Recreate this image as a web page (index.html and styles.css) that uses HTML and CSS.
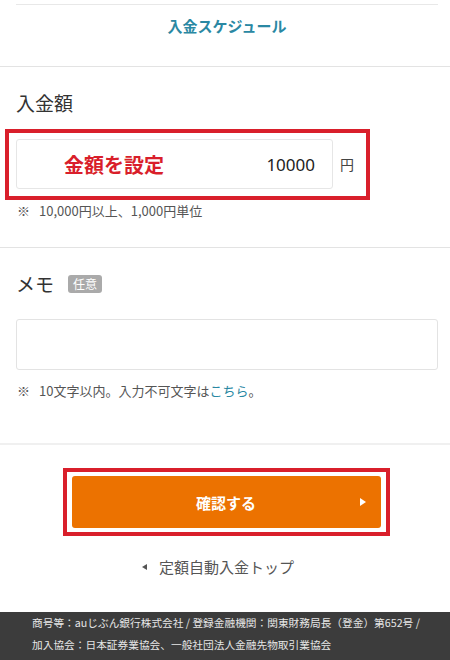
FILE: index.html
```html
<!DOCTYPE html>
<html lang="ja">

<head>
    <meta charset="UTF-8">
    <meta name="viewport" content="width=device-width, initial-scale=1.0">
    <title>定額自動入金</title>
    <link rel="stylesheet" href="styles.css">
</head>

<body>

    <!-- 入金スケジュール -->
    <div class="schedule">
        <div class="schedule-inner">
            <a class="schedule-link" href="#">入金スケジュール</a>
        </div>
    </div>

    <!-- 入金額 -->
    <section class="section amount">
        <h2 class="section-title">入金額</h2>
        <div class="mark-frame amount-frame">
            <div class="amount-input">
                <span class="amount-hint">金額を設定</span>
                <span class="amount-value">10000</span>
            </div>
            <span class="unit">円</span>
        </div>
        <p class="note">※<span class="note-text">10,000円以上、1,000円単位</span></p>
    </section>

    <!-- メモ -->
    <section class="section memo">
        <h2 class="section-title">メモ<span class="badge">任意</span></h2>
        <div class="memo-input"></div>
        <p class="note">※<span class="note-text">10文字以内。入力不可文字は<a href="#">こちら</a>。</span></p>
    </section>

    <!-- 確認ボタン -->
    <div class="actions">
        <div class="mark-frame button-frame">
            <button class="confirm-btn">確認する<span class="btn-arrow"></span></button>
        </div>
        <a class="back-link" href="#"><span class="back-arrow"></span>定額自動入金トップ</a>
    </div>

    <footer class="footer">
        <p>商号等：auじぶん銀行株式会社 / 登録金融機関：関東財務局長（登金）第652号 /</p>
        <p>加入協会：日本証券業協会、一般社団法人金融先物取引業協会</p>
    </footer>

</body>

</html>
```

FILE: styles.css
```css
body {
    margin: 0;
    padding: 0;
    background-color: #fff;
    color: #333;
    font-family: "Noto Sans CJK JP", "Noto Sans", sans-serif;
}

a {
    text-decoration: none;
}

/* 入金スケジュール */
.schedule {
    padding-top: 4px;
    border-bottom: 1px solid #e3e3e3;
}

.schedule-inner {
    margin: 0 12px 0 16px;
    height: 62px;
    border-top: 1px solid #e8e8e8;
    display: flex;
    align-items: center;
    justify-content: center;
    box-sizing: border-box;
    padding-bottom: 21px;
}

.schedule-link {
    color: #2a88a3;
    font-size: 15px;
    font-weight: bold;
}

/* セクション共通 */
.section {
    padding: 23px 12px 28px 16px;
    border-bottom: 1px solid #e3e3e3;
}

.section-title {
    margin: 0;
    font-size: 19px;
    font-weight: normal;
    line-height: 26px;
    color: #333;
    display: flex;
    align-items: center;
}

.note {
    margin: 3px 0 0;
    font-size: 13px;
    line-height: 16px;
    color: #555;
    padding-left: 1px;
}

.note-text {
    margin-left: 9px;
}

.note a {
    color: #2a88a3;
}

/* 赤枠 */
.mark-frame {
    border: 4px solid #d91f2b;
}

/* 入金額 */
.amount-frame {
    display: inline-flex;
    align-items: center;
    margin: 13px 0 0 -11px;
    padding: 6px 12px 7px 7px;
}

.amount-input {
    width: 317px;
    height: 50px;
    box-sizing: border-box;
    border: 1px solid #e6e6e6;
    border-radius: 3px;
    display: flex;
    align-items: center;
    justify-content: space-between;
    padding: 0 17px 0 47px;
}

.amount-hint {
    color: #d91f2b;
    font-size: 20px;
    font-weight: bold;
}

.amount-value {
    color: #222;
    font-size: 17px;
    font-family: "Noto Sans", sans-serif;
}

.unit {
    margin-left: 7px;
    font-size: 14px;
    color: #444;
}

/* メモ */
.memo {
    padding-bottom: 44px;
    border-bottom: 2px solid #f0f0f0;
}

.badge {
    margin-left: 14px;
    padding: 0 5px;
    height: 18px;
    line-height: 18px;
    font-size: 12px;
    color: #fff;
    background-color: #aaa;
    border-radius: 3px;
}

.memo-input {
    margin-top: 22px;
    height: 51px;
    box-sizing: border-box;
    border: 1px solid #e3e3e3;
    border-radius: 3px;
}

.memo .note {
    margin-top: 13px;
}

/* ボタン */
.actions {
    padding-top: 23px;
    display: flex;
    flex-direction: column;
    align-items: center;
}

.button-frame {
    padding: 4px 5px 4px 5px;
    margin-left: 2px;
}

.confirm-btn {
    position: relative;
    display: block;
    width: 309px;
    height: 52px;
    border: none;
    border-radius: 3px;
    background-color: #ec7200;
    color: #fff;
    font-family: inherit;
    font-size: 15px;
    font-weight: bold;
    cursor: pointer;
}

.btn-arrow {
    position: absolute;
    right: 15px;
    top: 22px;
    width: 0;
    height: 0;
    border-left: 6px solid #fff;
    border-top: 4px solid transparent;
    border-bottom: 4px solid transparent;
}

.back-link {
    margin: 20px 14px 0 0;
    display: flex;
    align-items: center;
    color: #555;
    font-size: 15px;
    line-height: 22px;
}

.back-arrow {
    width: 0;
    height: 0;
    margin-right: 12px;
    border-right: 5px solid #555;
    border-top: 3.5px solid transparent;
    border-bottom: 3.5px solid transparent;
}

/* フッター */
.footer {
    margin-top: 34px;
    background-color: #3c3c3c;
    padding: 0 0 10px 32px;
}

.footer p {
    margin: 0;
    font-size: 10.7px;
    line-height: 22px;
    color: #e6e6e6;
}
```
